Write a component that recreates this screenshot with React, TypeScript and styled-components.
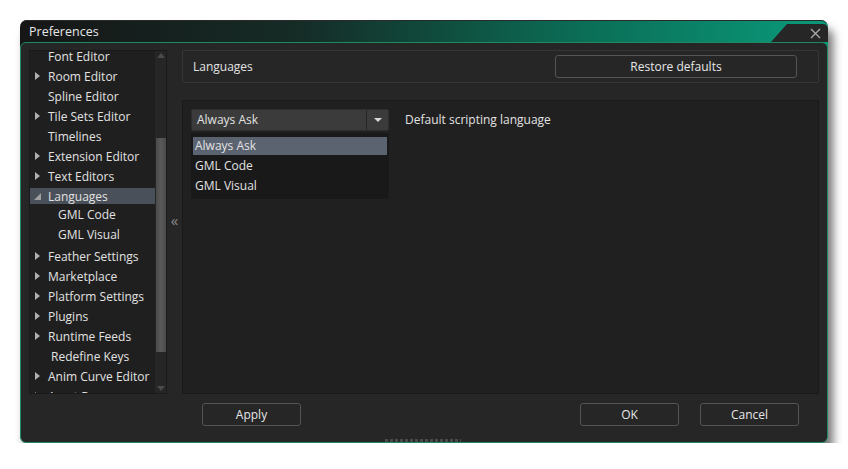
import styled, { createGlobalStyle } from "styled-components";

const GlobalStyle = createGlobalStyle`
  html, body {
    margin: 0;
    background: #fff;
  }
  body {
    font-family: "Open Sans", "Noto Sans", sans-serif;
    font-size: 12px;
    color: #e2e2e2;
  }
`;

const Page = styled.div`
  padding: 20px 0 0 20px;
`;

const Window = styled.div`
  width: 808px;
  height: 423px;
  display: flex;
  flex-direction: column;
  border-radius: 7px;
  background: linear-gradient(90deg, #161616 0%, #152c27 35%, #0b6b54 68%, #0a9a7b 100%) top / 100%
    30px no-repeat;
  box-shadow: 5px 9px 10px rgba(0, 0, 0, 0.55);
`;

const TitleBar = styled.div`
  height: 22px;
  display: flex;
  align-items: flex-end;
  justify-content: space-between;
  border-top: 1px solid #2a2a2a;
  border-radius: 7px 7px 0 0;
  box-sizing: border-box;
`;

const Title = styled.span`
  padding-left: 9px;
  align-self: center;
  font-size: 12.5px;
  color: #e6e6e6;
`;

const CloseNotch = styled.div`
  width: 57px;
  height: 18px;
  background: #262626;
  clip-path: polygon(16px 0, 100% 0, 100% 100%, 0 100%);
  border-top-right-radius: 5px;
  display: flex;
  justify-content: flex-end;
  align-items: center;
  padding-right: 7px;
  box-sizing: border-box;
`;

const Body = styled.div`
  flex: 1;
  display: flex;
  flex-direction: column;
  background: #262626;
  border: 1px solid #1d8a5f;
  border-radius: 6px;
  padding: 7px 8px 0 8px;
  min-height: 0;
`;

const Main = styled.div`
  display: flex;
  height: 344px;
`;

const Tree = styled.div`
  width: 138px;
  display: flex;
  background: #1f1f1f;
  border: 1px solid #1a1a1a;
  box-sizing: border-box;
  overflow: hidden;
`;

const TreeList = styled.div`
  flex: 1;
  display: flex;
  flex-direction: column;
  margin-top: -5px;
`;

const Row = styled.div<{ $selected?: boolean; $child?: boolean; $indent?: number }>`
  flex: none;
  height: 16px;
  margin: ${(p) => (p.$child ? "0 0 4px" : "2px 0")};
  display: flex;
  align-items: center;
  padding-left: ${(p) => p.$indent ?? 18}px;
  background: ${(p) => (p.$selected ? "#4a5059" : "transparent")};
  white-space: nowrap;
  position: relative;
`;

const Arrow = styled.span<{ $open?: boolean }>`
  position: absolute;
  left: 5px;
  top: 4px;
  width: 0;
  height: 0;
  ${(p) =>
    p.$open
      ? `border-left: 7px solid transparent; border-bottom: 7px solid #a0a0a0; top: 5px; left: 4px;`
      : `border-top: 4px solid transparent; border-bottom: 4px solid transparent; border-left: 5px solid #b0b0b0;`}
`;

const ScrollBar = styled.div`
  width: 11px;
  background: #262626;
  display: flex;
  flex-direction: column;
  align-items: center;
  padding: 2px 0;
  box-sizing: border-box;
`;

const ScrollArrow = styled.span<{ $down?: boolean }>`
  width: 0;
  height: 0;
  border-left: 4px solid transparent;
  border-right: 4px solid transparent;
  ${(p) => (p.$down ? "border-top: 5px solid #4a4a4a;" : "border-bottom: 5px solid #4a4a4a;")}
`;

const Thumb = styled.div`
  width: 10px;
  height: 214px;
  margin: 80px 0 auto;
  background: linear-gradient(90deg, #4a4a4a, #5a5a5a 50%, #4a4a4a);
`;

const Splitter = styled.div`
  width: 15px;
  display: flex;
  align-items: center;
  justify-content: center;
  color: #8a8a8a;
  font-size: 15px;
  padding-bottom: 4px;
`;

const RightCol = styled.div`
  flex: 1;
  display: flex;
  flex-direction: column;
  gap: 17px;
`;

const Header = styled.div`
  height: 33px;
  box-sizing: border-box;
  border: 1px solid #363636;
  border-radius: 2px;
  display: flex;
  align-items: center;
  justify-content: space-between;
  padding: 0 21px 0 10px;
`;

const Button = styled.button<{ $width: number }>`
  width: ${(p) => p.$width}px;
  height: 23px;
  background: #262626;
  border: 1px solid #545454;
  border-radius: 3px;
  color: #e6e6e6;
  font-family: "Open Sans", "Noto Sans", sans-serif;
  font-size: 12px;
  padding: 0;
`;

const Content = styled.div`
  flex: 1;
  background: #202020;
  border: 1px solid #1a1a1a;
  padding: 8px;
  display: flex;
  align-items: flex-start;
  gap: 16px;
`;

const ComboWrap = styled.div`
  width: 198px;
  display: flex;
  flex-direction: column;
  gap: 2px;
`;

const Combo = styled.div`
  height: 22px;
  display: flex;
  background: #3b3b3b;
  border: 1px solid #2e2e2e;
  box-sizing: border-box;
  border-radius: 2px;
`;

const ComboText = styled.span`
  flex: 1;
  padding-left: 5px;
  line-height: 20px;
`;

const ComboButton = styled.span`
  width: 21px;
  border-left: 1px solid #262626;
  display: flex;
  align-items: center;
  justify-content: center;
  &::after {
    content: "";
    border-left: 4px solid transparent;
    border-right: 4px solid transparent;
    border-top: 4px solid #d8d8d8;
  }
`;

const DropList = styled.div`
  background: #191919;
  border-radius: 2px;
  padding: 4px 2px;
  display: flex;
  flex-direction: column;
  gap: 2px;
`;

const DropItem = styled.div<{ $active?: boolean }>`
  height: 18px;
  line-height: 18px;
  padding-left: 2px;
  background: ${(p) => (p.$active ? "#5b6370" : "transparent")};
`;

const FieldLabel = styled.span`
  line-height: 22px;
`;

const Footer = styled.div`
  display: flex;
  gap: 21px;
  padding: 9px 20px 0 173px;
`;

const Spacer = styled.div`
  flex: 1;
`;

const GripRow = styled.div`
  margin-top: auto;
  display: flex;
  align-items: flex-end;
  height: 6px;
`;

const Grip = styled.div`
  width: 76px;
  height: 3px;
  margin-left: 356px;
  background: repeating-linear-gradient(90deg, #4a4a4a 0 3px, transparent 3px 5px);
`;

const tree: { label: string; arrow?: boolean; open?: boolean; child?: boolean; indent?: number }[] = [
  { label: "Font Editor" },
  { label: "Room Editor", arrow: true },
  { label: "Spline Editor" },
  { label: "Tile Sets Editor", arrow: true },
  { label: "Timelines" },
  { label: "Extension Editor", arrow: true },
  { label: "Text Editors", arrow: true },
  { label: "Languages", arrow: true, open: true },
  { label: "GML Code", child: true, indent: 28 },
  { label: "GML Visual", child: true, indent: 28 },
  { label: "Feather Settings", arrow: true },
  { label: "Marketplace", arrow: true },
  { label: "Platform Settings", arrow: true },
  { label: "Plugins", arrow: true },
  { label: "Runtime Feeds", arrow: true },
  { label: "Redefine Keys", indent: 21 },
  { label: "Anim Curve Editor", arrow: true },
  { label: "Asset Browser", arrow: true },
];

export default function App() {
  return (
    <Page>
      <GlobalStyle />
      <Window>
        <TitleBar>
          <Title>Preferences</Title>
          <CloseNotch>
            <svg width="11" height="11" viewBox="0 0 11 11">
              <path d="M1 1 L10 10 M10 1 L1 10" stroke="#a8a8a8" strokeWidth="1.4" />
            </svg>
          </CloseNotch>
        </TitleBar>
        <Body>
          <Main>
            <Tree>
              <TreeList>
                {tree.map((t) => (
                  <Row
                    key={t.label}
                    $child={t.child}
                    $indent={t.indent}
                    $selected={t.label === "Languages"}
                  >
                    {t.arrow && <Arrow $open={t.open} />}
                    {t.label}
                  </Row>
                ))}
              </TreeList>
              <ScrollBar>
                <ScrollArrow />
                <Thumb />
                <ScrollArrow $down />
              </ScrollBar>
            </Tree>
            <Splitter>«</Splitter>
            <RightCol>
              <Header>
                <span>Languages</span>
                <Button $width={242}>Restore defaults</Button>
              </Header>
              <Content>
                <ComboWrap>
                  <Combo>
                    <ComboText>Always Ask</ComboText>
                    <ComboButton />
                  </Combo>
                  <DropList>
                    <DropItem $active>Always Ask</DropItem>
                    <DropItem>GML Code</DropItem>
                    <DropItem>GML Visual</DropItem>
                  </DropList>
                </ComboWrap>
                <FieldLabel>Default scripting language</FieldLabel>
              </Content>
            </RightCol>
          </Main>
          <Footer>
            <Button $width={99}>Apply</Button>
            <Spacer />
            <Button $width={99}>OK</Button>
            <Button $width={99}>Cancel</Button>
          </Footer>
          <GripRow>
            <Grip />
          </GripRow>
        </Body>
      </Window>
    </Page>
  );
}
